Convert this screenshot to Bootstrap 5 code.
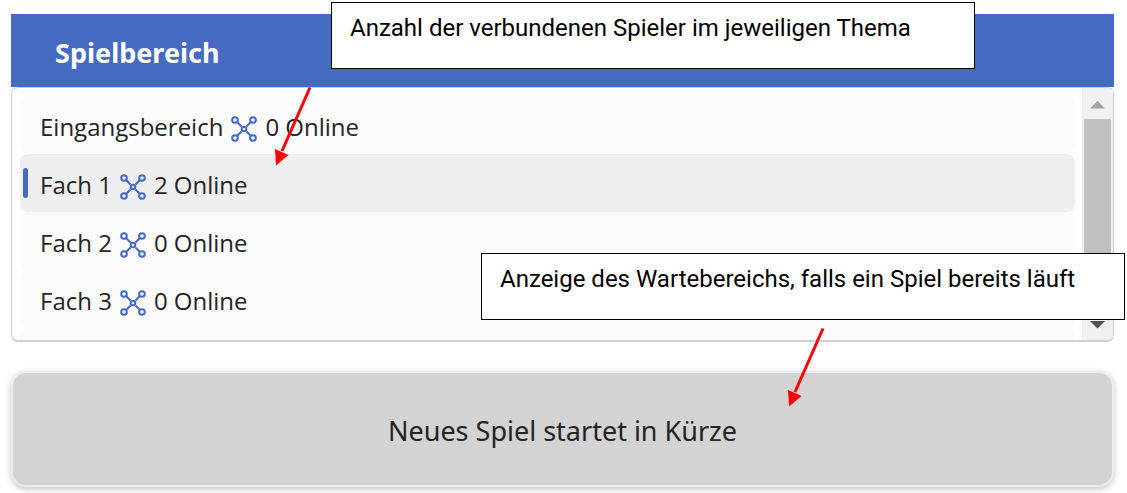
<!DOCTYPE html>
<html lang="de">
<head>
<meta charset="utf-8">
<meta name="viewport" content="width=device-width, initial-scale=1">
<title>Spielbereich</title>
<link href="https://cdn.jsdelivr.net/npm/bootstrap@5.3.0/dist/css/bootstrap.min.css" rel="stylesheet">
<style>
  :root { --brand: #456ac1; }
  body { font-family: "Noto Sans", "Open Sans", sans-serif; color: #242424; background: #fff; }
  .stage { padding: 14px 13px 6px 11px; }
  .area-head { background: var(--brand); color: #fff; padding: 4px 44px 0; height: 73px; }
  .area-head h1 { font-size: 27px; line-height: 36px; font-weight: 700; }
  .topic-box { height: 255px; border: 1px solid #d1d1d1; border-bottom-width: 2px; border-radius: 7px; overflow: hidden; }
  .topic-list { padding: 8px 7px 0 8px; overflow: hidden; }
  .topic { flex: none; height: 58px; padding: 3px 20px 0; border: 0; border-radius: 8px; background: #fbfbfb; color: inherit; font-family: "Open Sans", "Noto Sans", sans-serif; font-size: 24px; line-height: 32px; text-align: left; gap: 8px; }
  .topic.selected { background: #eee; }
  .topic.selected::before { content: ""; position: absolute; left: 3px; top: 14px; bottom: 14px; width: 5px; border-radius: 3px; background: var(--brand); }
  .net { width: 26px; height: 26px; margin-top: 4px; fill: none; stroke: var(--brand); stroke-width: 2; }
  .scroll-track { width: 31px; background: #f0f0f0; padding: 13px 2px 11px; }
  .scroll-thumb { background: #c1c1c1; margin: 10px 0 65px; }
  .scroll-track svg { width: 15px; height: 8px; flex: none; }
  .waiting { margin-top: 29px; padding-top: 4px; height: 116px; background: #d3d3d3; border: 2px solid #ececec; border-radius: 15px; box-shadow: 0 2px 6px rgba(0,0,0,.24); font-size: 27px; line-height: 36px; }
  .callout { position: absolute; width: 644px; height: 67px; padding: 9px 18px; border: 1px solid #000; background: #fff; color: #000; font-family: Roboto, sans-serif; font-size: 24px; line-height: 32px; white-space: nowrap; }
  .callout-players { left: 331px; top: 2px; }
  .callout-waiting { left: 481px; top: 253px; }
  .pointer { position: absolute; width: 40px; height: 82px; overflow: visible; }
  .pointer-players { left: 273px; top: 86px; }
  .pointer-waiting { left: 786px; top: 327px; }
</style>
</head>
<body>
<svg class="d-none">
  <symbol id="network" viewBox="0 0 26 26">
    <path d="M6.300 6.300 10.500 10.500M19.700 6.300 15.500 10.500M6.300 19.700 10.500 15.500M19.700 19.700 15.500 15.500"/>
    <circle cx="4" cy="4" r="2.800"/><circle cx="22" cy="4" r="2.800"/><circle cx="13" cy="13" r="2.300"/>
    <circle cx="4" cy="22" r="2.800"/><circle cx="22" cy="22" r="2.800"/>
  </symbol>
  <symbol id="arrow" viewBox="0 0 40 82">
    <path d="M37 1.500 9 65" fill="none" stroke="#f00" stroke-width="3"/>
    <path d="M2 63 15.500 69 3 79.500Z" fill="#f00"/>
  </symbol>
</svg>
<main class="stage position-relative">
  <header class="area-head d-flex align-items-center">
    <h1 class="m-0">Spielbereich</h1>
  </header>
  <section class="topic-box d-flex" aria-label="Themen">
    <div class="topic-list d-flex flex-column flex-grow-1">
      <button type="button" class="topic d-flex align-items-center"><span>Eingangsbereich</span><svg class="net"><use href="#network"/></svg><span>0 Online</span></button>
      <button type="button" class="topic selected position-relative d-flex align-items-center" aria-pressed="true"><span>Fach 1</span><svg class="net"><use href="#network"/></svg><span>2 Online</span></button>
      <button type="button" class="topic d-flex align-items-center"><span>Fach 2</span><svg class="net"><use href="#network"/></svg><span>0 Online</span></button>
      <button type="button" class="topic d-flex align-items-center"><span>Fach 3</span><svg class="net"><use href="#network"/></svg><span>0 Online</span></button>
      <div class="topic"></div>
    </div>
    <div class="scroll-track d-flex flex-column align-items-center">
      <svg viewBox="0 0 15 8"><path d="M0 7.500 7.500 0 15 7.500Z" fill="#a3a3a3"/></svg>
      <div class="scroll-thumb flex-grow-1 w-100"></div>
      <svg viewBox="0 0 15 8"><path d="M0 0H15L7.500 7.500Z" fill="#505050"/></svg>
    </div>
  </section>
  <section class="waiting d-flex align-items-center justify-content-center">Neues Spiel startet in Kürze</section>

  <div class="callout callout-players">Anzahl der verbundenen Spieler im jeweiligen Thema</div>
  <svg class="pointer pointer-players" aria-hidden="true"><use href="#arrow"/></svg>
  <div class="callout callout-waiting">Anzeige des Wartebereichs, falls ein Spiel bereits läuft</div>
  <svg class="pointer pointer-waiting" aria-hidden="true"><use href="#arrow"/></svg>
</main>
<script src="https://cdn.jsdelivr.net/npm/bootstrap@5.3.0/dist/js/bootstrap.bundle.min.js"></script>
</body>
</html>
